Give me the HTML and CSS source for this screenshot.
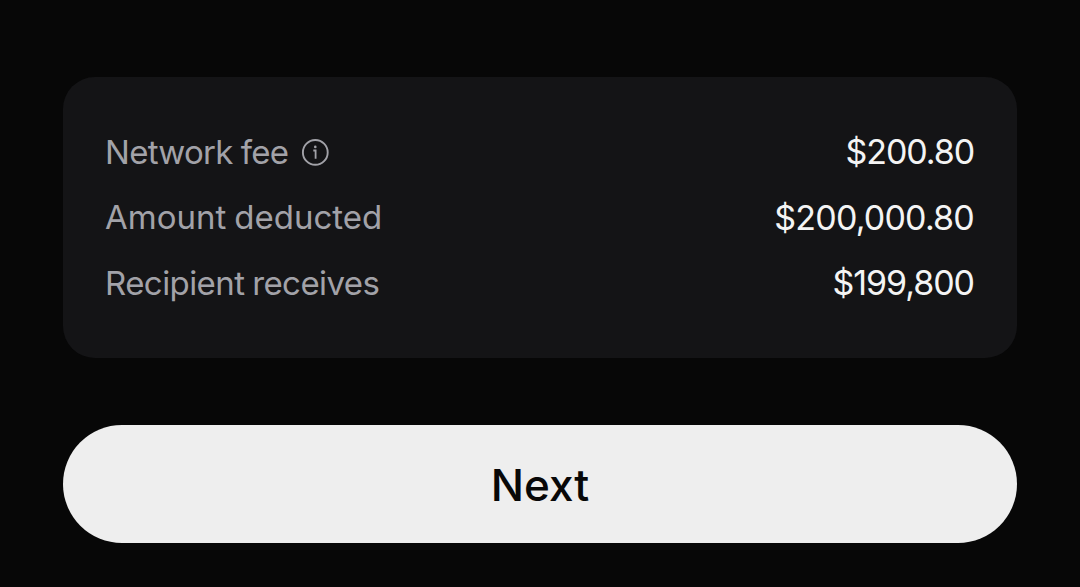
FILE: index.html
```html
<!DOCTYPE html>
<html lang="en">
<head>
<meta charset="utf-8">
<title>Review transfer</title>
<link rel="stylesheet" href="styles.css">
</head>
<body>
<main class="screen">
  <dl class="summary">
    <div class="row">
      <dt class="label"><span class="text fee">Network fee</span>
        <svg class="info" viewBox="0 0 28 28" fill="none" stroke="currentColor" stroke-width="1.9"><circle cx="14.3" cy="14.4" r="12.4"/><path d="M12.3 12.5H14.6V20.8" stroke-width="1.8"/><circle cx="14.3" cy="8.9" r="1.3" fill="currentColor" stroke="none"/></svg>
      </dt>
      <dd class="value"><span class="text v1">$200.80</span></dd>
    </div>
    <div class="row">
      <dt class="label"><span class="text amount">Amount deducted</span></dt>
      <dd class="value"><span class="text v2">$200,000.80</span></dd>
    </div>
    <div class="row">
      <dt class="label"><span class="text recipient">Recipient receives</span></dt>
      <dd class="value"><span class="text v3">$199,800</span></dd>
    </div>
  </dl>
  <button class="next" type="button"><span class="text">Next</span></button>
</main>
</body>
</html>
```
FILE: styles.css
```css
* { box-sizing: border-box; }
body { margin: 0; background: #070707; font-family: Inter, "Liberation Sans", sans-serif; }
.screen { height: 587px; padding: 77px 63px 44px; display: flex; flex-direction: column; justify-content: space-between; }
.summary { margin: 0; height: 281px; padding: 42px 43px 43px 42px; border-radius: 32px; background: #141416; }
.row { display: flex; justify-content: space-between; align-items: center; height: 65.5px; }
.label { display: flex; align-items: center; gap: 13px; color: #a2a2a8; font-size: 33px; }
.value { margin: 0; color: #f4f4f4; font-size: 34px; }
.text { white-space: nowrap; }
.fee { letter-spacing: -0.7px; word-spacing: -0.6px; }
.amount { letter-spacing: 0.03px; word-spacing: -1.6px; }
.recipient { letter-spacing: -0.57px; word-spacing: -1px; }
.v1 { letter-spacing: -1.1px; }
.v2 { letter-spacing: -0.8px; }
.v3 { letter-spacing: -1.05px; }
.info { width: 28px; height: 28px; }
.next { height: 118px; padding: 2px 0 0; border: 0; border-radius: 59px; background: #eee; color: #080808; font: 500 44px Inter, sans-serif; }
```
